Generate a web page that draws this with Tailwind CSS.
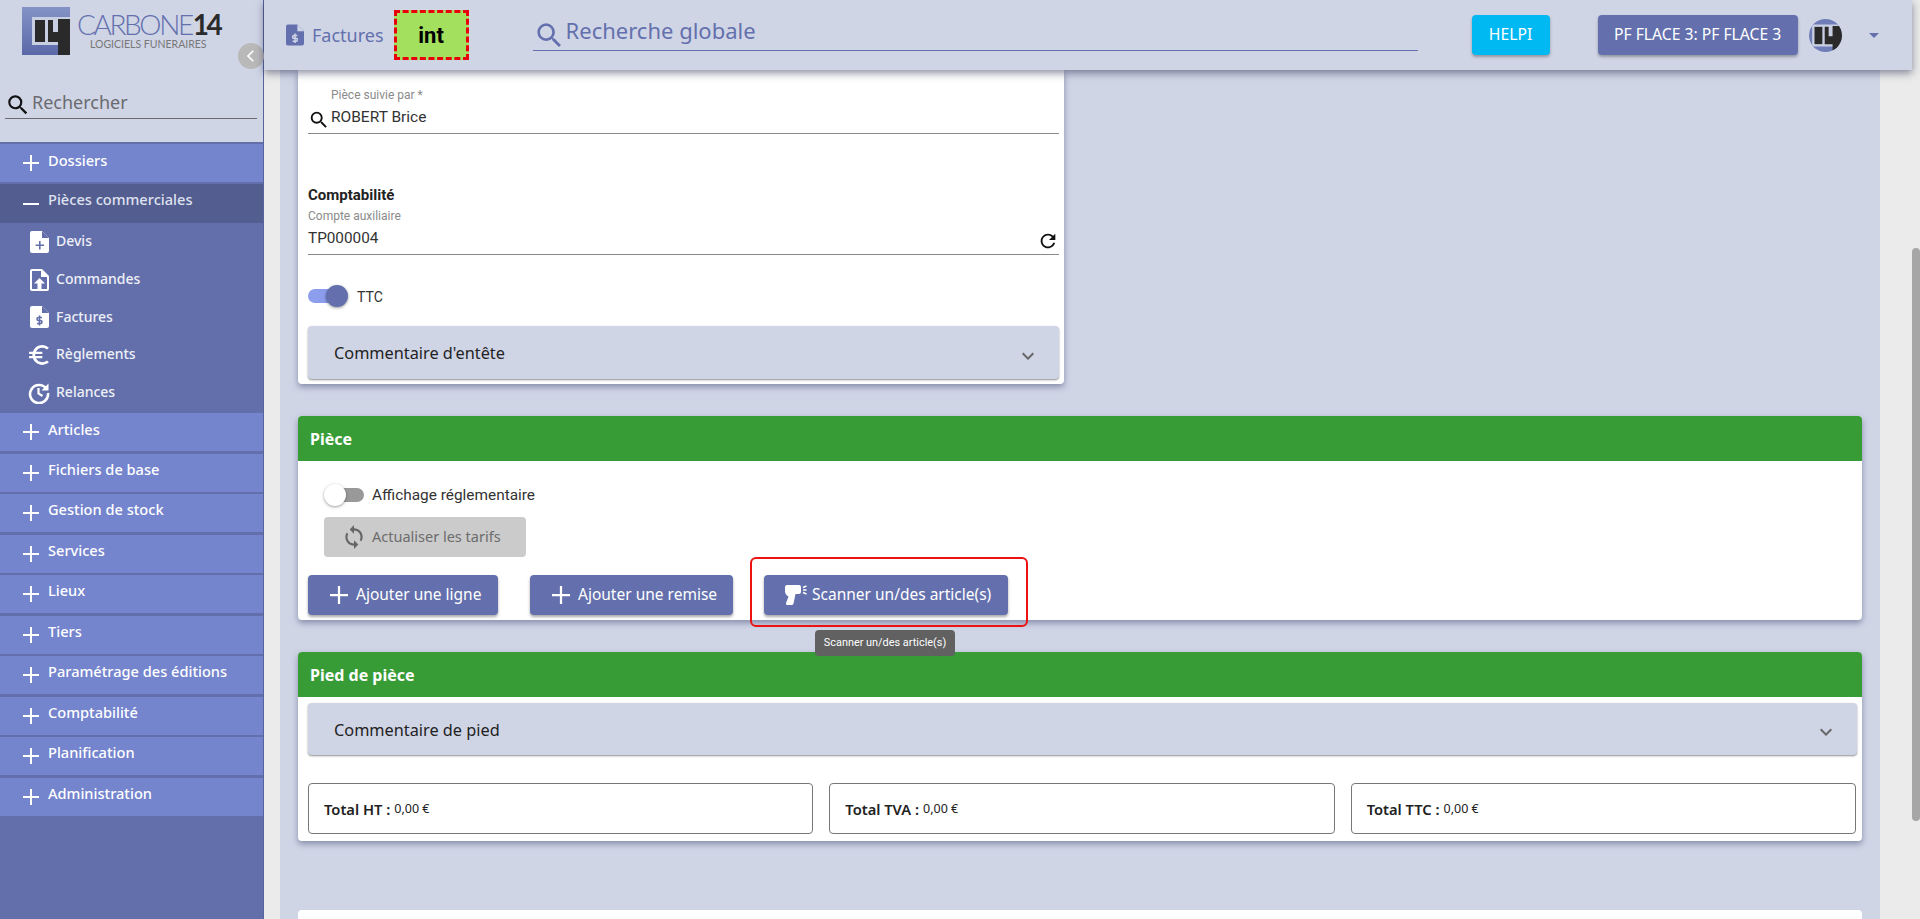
<!DOCTYPE html>
<html lang="fr">
<head>
    <meta charset="UTF-8">
    <title>Factures - Carbone 14</title>
    <script src="https://cdn.jsdelivr.net/npm/@tailwindcss/browser@4"></script>
</head>
<body class="h-screen overflow-hidden bg-[#ebebeb] font-['Noto_Sans',sans-serif] text-[#222]">
<div class="flex h-[919px] w-[1920px]">

    <!-- Sidebar -->
    <aside class="relative w-[264px] shrink-0 bg-[#626fab] border-r border-[#56639c] flex flex-col">
        <div class="bg-[#d0d5e6] h-[142px] relative shrink-0">
            <div class="absolute left-[22px] top-[7px] flex">
                <svg class="w-[48px] h-[48px]" viewBox="0 0 48 48">
                    <defs><linearGradient id="lg" x1="0" y1="0" x2="0" y2="1"><stop offset="0" stop-color="#8493c6"/><stop offset="1" stop-color="#5a68a8"/></linearGradient></defs>
                    <rect width="48" height="48" fill="url(#lg)"/>
                    <rect x="10" y="10" width="38" height="28" fill="#c9cfe2"/>
                    <rect x="13" y="13" width="10" height="22" fill="#2a2a2a"/>
                    <path d="M26 13h5v12h5V12h12v36H36V35H26z" fill="#2a2a2a"/>
                </svg>
            </div>
            <div class="absolute left-[77px] top-[12px] font-['Lato',sans-serif] font-light text-[28px] leading-[24px] tracking-[-2.4px] text-[#6370ad] whitespace-nowrap">CARBONE<span class="font-bold text-[#2b2b2b] ml-[1px]">14</span></div>
            <div class="absolute left-[90px] top-[37px] font-['Lato',sans-serif] text-[10.5px] leading-[14px] text-[#777] whitespace-nowrap">LOGICIELS FUNERAIRES</div>
            <div class="absolute right-[-1px] top-[43px] w-[26px] h-[26px] rounded-full bg-[#b9b9b9] flex items-center justify-center">
                <svg class="w-[20px] h-[20px]" viewBox="0 0 24 24" fill="#fff"><path d="M15.4 6.4 14 5l-7 7 7 7 1.4-1.4L9.8 12z"/></svg>
            </div>
            <div class="absolute left-[5px] right-[6px] top-[88px] h-[31px] border-b border-[#6b6b70] flex items-center">
                <svg class="w-[26px] h-[26px] mt-[4px] shrink-0" viewBox="0 0 24 24" fill="#111"><path d="M15.5 14h-.79l-.28-.27A6.471 6.471 0 0 0 16 9.5 6.5 6.5 0 1 0 9.5 16c1.61 0 3.09-.59 4.23-1.57l.27.28v.79l5 4.99L20.49 19l-4.99-5zm-6 0C7.01 14 5 11.99 5 9.5S7.01 5 9.5 5 14 7.01 14 9.5 11.99 14 9.5 14z"/></svg>
                <span class="ml-[1px] text-[18px] leading-[24px] -mt-[3px] text-[#6a6a70]">Rechercher</span>
            </div>
        </div>
        <nav class="flex flex-col pt-[2px]">
            <a class="h-[38px] mb-[2px] bg-[#7484cd] flex items-center text-white font-medium text-[14.6px]">
                <svg class="ml-[23px] w-[16px] h-[16px] shrink-0" viewBox="0 0 16 16" fill="#fff"><path d="M7 0h2v7h7v2H9v7H7V9H0V7h7z"/></svg>
                <span class="ml-[9px] pb-[5px]">Dossiers</span>
            </a>
            <a class="h-[39px] bg-[#535d8f] flex items-center text-[#dfe2ef] font-medium text-[14.6px]">
                <svg class="ml-[23px] w-[16px] h-[16px] shrink-0" viewBox="0 0 16 16" fill="#fff"><rect y="7" width="16" height="2"/></svg>
                <span class="ml-[9px] pb-[7px]">Pièces commerciales</span>
            </a>
            <div class="h-[190px] flex flex-col text-[14px] text-[#eef0f7] font-medium">
                <a class="h-[37.7px] flex items-center">
                    <svg class="ml-[30px] w-[19px] h-[22px] shrink-0" viewBox="0 0 19 22"><path d="M2 0h10l7 7v13a2 2 0 0 1-2 2H2a2 2 0 0 1-2-2V2a2 2 0 0 1 2-2z" fill="#fff"/><path d="M12 0v7h7z" fill="#626fab"/><path d="M9 10h1.6v3.4H14V15h-3.4v3.4H9V15H5.6v-1.6H9z" fill="#626fab"/></svg>
                    <span class="ml-[7px] pb-[2px]">Devis</span>
                </a>
                <a class="h-[37.7px] flex items-center">
                    <svg class="ml-[30px] w-[19px] h-[22px] shrink-0" viewBox="0 0 19 22"><path d="M2 0h10l7 7v13a2 2 0 0 1-2 2H2a2 2 0 0 1-2-2V2a2 2 0 0 1 2-2z" fill="#fff"/><path d="M2 2h9v6h6v12H2z" fill="#626fab"/><path d="M9.5 9 15 14.5h-3.5V20h-4v-5.5H4z" fill="#fff"/></svg>
                    <span class="ml-[7px] pb-[2px]">Commandes</span>
                </a>
                <a class="h-[37.7px] flex items-center">
                    <svg class="ml-[30px] w-[19px] h-[22px] shrink-0" viewBox="0 0 19 22"><path d="M2 0h10l7 7v13a2 2 0 0 1-2 2H2a2 2 0 0 1-2-2V2a2 2 0 0 1 2-2z" fill="#fff"/><path d="M12 0v7h7z" fill="#626fab"/><path d="M12 11.5H8.5a1.5 1.5 0 0 0 0 3h2a1.5 1.5 0 0 1 0 3H7M9.500 9.500v10" fill="none" stroke="#626fab" stroke-width="1.6"/></svg>
                    <span class="ml-[7px] pb-[2px]">Factures</span>
                </a>
                <a class="h-[37.7px] flex items-center">
                    <svg class="ml-[28px] w-[22px] h-[22px] shrink-0" viewBox="2 2 20 20" fill="#fff"><path d="M15 18.5A6.48 6.48 0 0 1 9.24 15H15v-2H8.58c-.05-.33-.08-.66-.08-1s.03-.67.08-1H15V9H9.24A6.49 6.49 0 0 1 15 5.5c1.61 0 3.09.59 4.23 1.57L21 5.3A8.96 8.96 0 0 0 15 3c-3.92 0-7.24 2.51-8.48 6H3v2h3.06a8.3 8.3 0 0 0 0 2H3v2h3.52c1.24 3.49 4.56 6 8.48 6 2.31 0 4.41-.87 6-2.3l-1.78-1.77c-1.13.98-2.6 1.57-4.22 1.57z"/></svg>
                    <span class="ml-[6px] pb-[2px]">Règlements</span>
                </a>
                <a class="h-[37.7px] flex items-center">
                    <svg class="ml-[28px] w-[22px] h-[22px] shrink-0" viewBox="0 0 22 22" fill="none" stroke="#fff" stroke-width="2.6"><path d="M18.5 7A9 9 0 1 0 20 11"/><path d="M20.5 1.5v7h-7z" fill="#fff" stroke="none"/><path d="M10.5 6v5.5l4 2.5" stroke-width="2.2"/></svg>
                    <span class="ml-[6px] pb-[2px]">Relances</span>
                </a>
            </div>
            <div class="flex flex-col gap-[2.55px] text-white font-medium text-[14.6px]">
                <a class="h-[38px] bg-[#7484cd] flex items-center"><svg class="ml-[23px] w-[16px] h-[16px] shrink-0" viewBox="0 0 16 16" fill="#fff"><path d="M7 0h2v7h7v2H9v7H7V9H0V7h7z"/></svg><span class="ml-[9px] pb-[5px]">Articles</span></a>
                <a class="h-[38px] bg-[#7484cd] flex items-center"><svg class="ml-[23px] w-[16px] h-[16px] shrink-0" viewBox="0 0 16 16" fill="#fff"><path d="M7 0h2v7h7v2H9v7H7V9H0V7h7z"/></svg><span class="ml-[9px] pb-[6px]">Fichiers de base</span></a>
                <a class="h-[38px] bg-[#7484cd] flex items-center"><svg class="ml-[23px] w-[16px] h-[16px] shrink-0" viewBox="0 0 16 16" fill="#fff"><path d="M7 0h2v7h7v2H9v7H7V9H0V7h7z"/></svg><span class="ml-[9px] pb-[6px]">Gestion de stock</span></a>
                <a class="h-[38px] bg-[#7484cd] flex items-center"><svg class="ml-[23px] w-[16px] h-[16px] shrink-0" viewBox="0 0 16 16" fill="#fff"><path d="M7 0h2v7h7v2H9v7H7V9H0V7h7z"/></svg><span class="ml-[9px] pb-[6px]">Services</span></a>
                <a class="h-[38px] bg-[#7484cd] flex items-center"><svg class="ml-[23px] w-[16px] h-[16px] shrink-0" viewBox="0 0 16 16" fill="#fff"><path d="M7 0h2v7h7v2H9v7H7V9H0V7h7z"/></svg><span class="ml-[9px] pb-[6px]">Lieux</span></a>
                <a class="h-[38px] bg-[#7484cd] flex items-center"><svg class="ml-[23px] w-[16px] h-[16px] shrink-0" viewBox="0 0 16 16" fill="#fff"><path d="M7 0h2v7h7v2H9v7H7V9H0V7h7z"/></svg><span class="ml-[9px] pb-[5px]">Tiers</span></a>
                <a class="h-[38px] bg-[#7484cd] flex items-center"><svg class="ml-[23px] w-[16px] h-[16px] shrink-0" viewBox="0 0 16 16" fill="#fff"><path d="M7 0h2v7h7v2H9v7H7V9H0V7h7z"/></svg><span class="ml-[9px] pb-[6px]">Paramétrage des éditions</span></a>
                <a class="h-[38px] bg-[#7484cd] flex items-center"><svg class="ml-[23px] w-[16px] h-[16px] shrink-0" viewBox="0 0 16 16" fill="#fff"><path d="M7 0h2v7h7v2H9v7H7V9H0V7h7z"/></svg><span class="ml-[9px] pb-[5px]">Comptabilité</span></a>
                <a class="h-[38px] bg-[#7484cd] flex items-center"><svg class="ml-[23px] w-[16px] h-[16px] shrink-0" viewBox="0 0 16 16" fill="#fff"><path d="M7 0h2v7h7v2H9v7H7V9H0V7h7z"/></svg><span class="ml-[9px] pb-[6px]">Planification</span></a>
                <a class="h-[38px] bg-[#7484cd] flex items-center"><svg class="ml-[23px] w-[16px] h-[16px] shrink-0" viewBox="0 0 16 16" fill="#fff"><path d="M7 0h2v7h7v2H9v7H7V9H0V7h7z"/></svg><span class="ml-[9px] pb-[5px]">Administration</span></a>
            </div>
        </nav>
    </aside>

    <!-- Right part -->
    <div class="flex-1 min-w-0 flex flex-col">
        <header class="relative z-10 h-[70px] shrink-0 bg-[#d0d5e6] shadow-[0_3px_8px_rgba(40,45,80,.55)] flex items-center">
            <svg class="ml-[22px] w-[18px] h-[22px] shrink-0" viewBox="0 0 19 22"><path d="M2 0h10l7 7v13a2 2 0 0 1-2 2H2a2 2 0 0 1-2-2V2a2 2 0 0 1 2-2z" fill="#6370ad"/><path d="M12 0v7h7z" fill="#d0d5e6"/><path d="M12 11.5H8.5a1.5 1.5 0 0 0 0 3h2a1.5 1.5 0 0 1 0 3H7M9.500 9.500v10" fill="none" stroke="#d0d5e6" stroke-width="1.6"/></svg>
            <span class="ml-[8px] text-[18px] text-[#6370ad]">Factures</span>
            <div class="ml-[10px] w-[75px] h-[50px] bg-[#a2e05e] border-[3px] border-dashed border-[#e8000b] flex items-center justify-center font-['Roboto',sans-serif] text-[22px] font-bold text-black">int</div>
            <div class="ml-[64px] w-[885px] h-[34px] mt-[-1px] border-b border-[#6370ad] flex items-center self-start translate-y-[18px]">
                <svg class="ml-[3px] w-[27px] h-[27px] mt-[3px] shrink-0" viewBox="2 2 20 20" fill="#6370ad"><path d="M15.5 14h-.79l-.28-.27A6.471 6.471 0 0 0 16 9.5 6.5 6.5 0 1 0 9.5 16c1.61 0 3.09-.59 4.23-1.57l.27.28v.79l5 4.99L20.49 19l-4.99-5zm-6 0C7.01 14 5 11.99 5 9.5S7.01 5 9.5 5 14 7.01 14 9.5 11.99 14 9.5 14z"/></svg>
                <span class="ml-[3px] mb-[7px] text-[22px] leading-[30px] text-[#6370ad]">Recherche globale</span>
            </div>
            <button class="ml-[54px] w-[78px] h-[40px] rounded-[4px] bg-[#00b9f2] text-white text-[15.7px] shadow-[0_2px_3px_rgba(0,0,0,.3)]">HELPI</button>
            <button class="ml-[48px] w-[200px] h-[40px] rounded-[4px] bg-[#6370ad] text-white text-[15.7px] shadow-[0_2px_3px_rgba(0,0,0,.3)]">PF FLACE 3: PF FLACE 3</button>
            <div class="ml-[11px] w-[33px] h-[33px] rounded-full overflow-hidden bg-[#6f7db8] shrink-0">
                <svg viewBox="6 3 42 42" class="w-[33px] h-[33px]"><rect x="10" y="10" width="38" height="28" fill="#c9cfe2"/><rect x="13" y="13" width="10" height="22" fill="#2a2a2a"/><path d="M26 13h5v12h5V12h12v36H36V35H26z" fill="#2a2a2a"/></svg>
            </div>
            <svg class="ml-[27px] w-[10px] h-[5px] shrink-0" viewBox="0 0 10 5" fill="#6370ad"><path d="M0 0h10L5 5z"/></svg>
        </header>

        <div class="flex-1 min-h-0 overflow-hidden pl-[16px] pr-[32px]">
            <main class="h-full bg-[#d0d5e6] px-[18px] flex flex-col overflow-hidden">

                <!-- Card: pièce suivie / comptabilité -->
                <section class="w-[766px] h-[314px] shrink-0 bg-white rounded-b-[4px] shadow-[0_3px_6px_rgba(60,70,110,.5)] pl-[10px] pr-[5px] pt-[18px] font-['Roboto',sans-serif] text-[#333]">
                    <div class="pl-[23px] h-[14px] text-[12px] leading-[14px] text-[#8a8a8a]">Pièce suivie par *</div>
                    <div class="h-[32px] border-b border-[#8a8a8a] flex items-center text-[15.5px]">
                        <svg class="w-[22px] h-[22px] mt-[5px] shrink-0" viewBox="0 0 24 24" fill="#111"><path d="M15.5 14h-.79l-.28-.27A6.471 6.471 0 0 0 16 9.5 6.5 6.5 0 1 0 9.500 16c1.61 0 3.09-.59 4.23-1.57l.27.28v.79l5 4.99L20.49 19l-4.99-5zm-6 0C7.01 14 5 11.99 5 9.5S7.01 5 9.5 5 14 7.01 14 9.5 11.99 14 9.5 14z"/></svg>
                        <span class="ml-[1px]">ROBERT Brice</span>
                    </div>
                    <div class="mt-[51px] text-[15px] leading-[20px] font-bold text-[#222]">Comptabilité</div>
                    <div class="mt-[4px] text-[12px] leading-[14px] text-[#8a8a8a]">Compte auxiliaire</div>
                    <div class="h-[32px] border-b border-[#8a8a8a] flex items-center justify-between text-[15.3px]">
                        <span>TP000004</span>
                        <svg class="w-[22px] h-[22px] mt-[5px] shrink-0" viewBox="0 0 24 24" fill="#111"><path d="M17.65 6.35A7.958 7.958 0 0 0 12 4c-4.42 0-7.99 3.58-7.99 8s3.57 8 7.99 8c3.73 0 6.84-2.55 7.73-6h-2.08A5.99 5.99 0 0 1 12 18c-3.31 0-6-2.69-6-6s2.69-6 6-6c1.66 0 3.14.69 4.22 1.78L13 11h7V4l-2.35 2.35z"/></svg>
                    </div>
                    <div class="mt-[30px] h-[22px] flex items-center text-[14px]">
                        <div class="relative w-[40px] h-[22px] shrink-0">
                            <div class="absolute left-0 top-[4px] w-[34px] h-[14px] rounded-full bg-[#8c9ded]"></div>
                            <div class="absolute right-0 top-0 w-[22px] h-[22px] rounded-full bg-[#6370ad] shadow-[0_1px_3px_rgba(0,0,0,.4)]"></div>
                        </div>
                        <span class="ml-[9px] pt-[2px]">TTC</span>
                    </div>
                    <div class="mt-[19px] h-[53px] rounded-[4px] bg-[#d0d5e6] shadow-[0_1px_2px_rgba(0,0,0,.45)] flex items-center justify-between pl-[26px] pr-[19px] font-['Noto_Sans',sans-serif] text-[16.3px] text-[#222]">
                        <span class="pt-[1px]">Commentaire d'entête</span>
                        <svg class="w-[24px] h-[24px] mt-[6px] shrink-0" viewBox="0 0 24 24" fill="#666"><path d="M16.59 8.59 12 13.17 7.41 8.59 6 10l6 6 6-6z"/></svg>
                    </div>
                </section>

                <!-- Card: Pièce -->
                <section class="mt-[32px] h-[204px] shrink-0 bg-white rounded-[4px] shadow-[0_3px_6px_rgba(60,70,110,.5)]">
                    <div class="h-[45px] rounded-t-[4px] bg-[#389c36] text-white font-bold text-[16px] flex items-center pl-[12px]">Pièce</div>
                    <div class="pl-[26px] pt-[23px] h-[22px] box-content flex items-center font-['Roboto',sans-serif] text-[15.4px] text-[#333]">
                        <div class="relative w-[40px] h-[22px] shrink-0">
                            <div class="absolute right-0 top-[4px] w-[34px] h-[14px] rounded-full bg-[#999]"></div>
                            <div class="absolute left-0 top-0 w-[22px] h-[22px] rounded-full bg-white shadow-[0_1px_3px_rgba(0,0,0,.4)]"></div>
                        </div>
                        <span class="ml-[8px] pt-[2px]">Affichage réglementaire</span>
                    </div>
                    <div class="ml-[26px] mt-[11px] w-[202px] h-[40px] rounded-[4px] bg-[#cbcbcb] text-[#6c6c6c] text-[14.5px] flex items-center">
                        <svg class="ml-[17px] w-[26px] h-[26px] shrink-0" viewBox="0 0 24 24" fill="#666"><path d="M12 4V1L8 5l4 4V6c3.31 0 6 2.69 6 6 0 1.01-.25 1.97-.7 2.8l1.46 1.46A7.93 7.93 0 0 0 20 12c0-4.42-3.58-8-8-8zm0 14c-3.31 0-6-2.69-6-6 0-1.01.25-1.97.7-2.8L5.24 7.74A7.93 7.93 0 0 0 4 12c0 4.42 3.58 8 8 8v3l4-4-4-4v3z"/></svg>
                        <span class="ml-[5px]">Actualiser les tarifs</span>
                    </div>
                    <div class="mt-[18px] pl-[10px] flex text-white text-[15.5px]">
                        <button class="w-[190px] h-[40px] rounded-[4px] bg-[#6370ad] shadow-[0_2px_3px_rgba(0,0,0,.35)] flex items-center pl-[22px]">
                            <svg class="w-[18px] h-[18px] shrink-0" viewBox="0 0 16 16" fill="#fff"><path d="M7 0h2v7h7v2H9v7H7V9H0V7h7z"/></svg>
                            <span class="ml-[8px]">Ajouter une ligne</span>
                        </button>
                        <button class="ml-[32px] w-[203px] h-[40px] rounded-[4px] bg-[#6370ad] shadow-[0_2px_3px_rgba(0,0,0,.35)] flex items-center pl-[22px]">
                            <svg class="w-[18px] h-[18px] shrink-0" viewBox="0 0 16 16" fill="#fff"><path d="M7 0h2v7h7v2H9v7H7V9H0V7h7z"/></svg>
                            <span class="ml-[8px]">Ajouter une remise</span>
                        </button>
                        <div class="relative ml-[31px]">
                            <button class="w-[244px] h-[40px] rounded-[4px] bg-[#6370ad] shadow-[0_2px_3px_rgba(0,0,0,.35)] flex items-center pl-[20px]">
                                <svg class="w-[25px] h-[20px] shrink-0" viewBox="0 0 25 20"><path d="M3 0H15a2 2 0 0 1 2 2V7a2 2 0 0 1-2 2H11.5L9.500 18.500A1.800 1.800 0 0 1 8 20H3.500A1.500 1.500 0 0 1 2 18.200L4.500 11.500A6 6 0 0 1 1 6V2a2 2 0 0 1 2-2z" fill="#fff"/><path d="M19 2.500l3.500-1.500M19 5h3.500M19 7.500l3.500 1.500" stroke="#fff" stroke-width="1.500"/></svg>
                                <span class="ml-[3px]">Scanner un/des article(s)</span>
                            </button>
                            <div class="absolute left-[-14px] top-[-18px] w-[278px] h-[70px] rounded-[6px] border-2 border-[#ee1111] pointer-events-none"></div>
                            <div class="absolute z-20 left-[51px] top-[55px] w-[140px] h-[26px] rounded-[4px] bg-[#616161] text-white font-['Roboto',sans-serif] font-normal text-[10.9px] flex items-center justify-center pt-[1px]">Scanner un/des article(s)</div>
                        </div>
                    </div>
                </section>

                <!-- Card: Pied de pièce -->
                <section class="mt-[32px] h-[189px] shrink-0 bg-white rounded-[4px] shadow-[0_3px_6px_rgba(60,70,110,.5)]">
                    <div class="h-[45px] rounded-t-[4px] bg-[#389c36] text-white font-bold text-[16px] flex items-center pl-[12px]">Pied de pièce</div>
                    <div class="ml-[10px] mr-[5px] mt-[6px] h-[52px] rounded-[4px] bg-[#d0d5e6] shadow-[0_1px_2px_rgba(0,0,0,.45)] flex items-center justify-between pl-[26px] pr-[19px] text-[16.3px]">
                        <span class="pt-[2px]">Commentaire de pied</span>
                        <svg class="w-[24px] h-[24px] mt-[6px] shrink-0" viewBox="0 0 24 24" fill="#666"><path d="M16.59 8.59 12 13.17 7.41 8.59 6 10l6 6 6-6z"/></svg>
                    </div>
                    <div class="ml-[10px] mr-[6px] mt-[28px] grid grid-cols-3 gap-[16px] text-[14.7px]">
                        <div class="h-[51px] rounded-[4px] border border-[#777] flex items-center pl-[15px] pt-[1px]"><b class="font-semibold">Total HT :</b><span class="ml-[4px] text-[12.5px]">0,00 €</span></div>
                        <div class="h-[51px] rounded-[4px] border border-[#777] flex items-center pl-[15px] pt-[1px]"><b class="font-semibold">Total TVA :</b><span class="ml-[4px] text-[12.5px]">0,00 €</span></div>
                        <div class="h-[51px] rounded-[4px] border border-[#777] flex items-center pl-[15px] pt-[1px]"><b class="font-semibold">Total TTC :</b><span class="ml-[4px] text-[12.5px]">0,00 €</span></div>
                    </div>
                </section>

                <section class="mt-[69px] h-[40px] shrink-0 bg-white rounded-t-[4px]"></section>
            </main>
        </div>
    </div>

    <!-- Scrollbar -->
    <div class="w-[8px] shrink-0 pt-[248px]">
        <div class="h-[573px] rounded-[4px] bg-[#a6a6a6]"></div>
    </div>
</div>
</body>
</html>
